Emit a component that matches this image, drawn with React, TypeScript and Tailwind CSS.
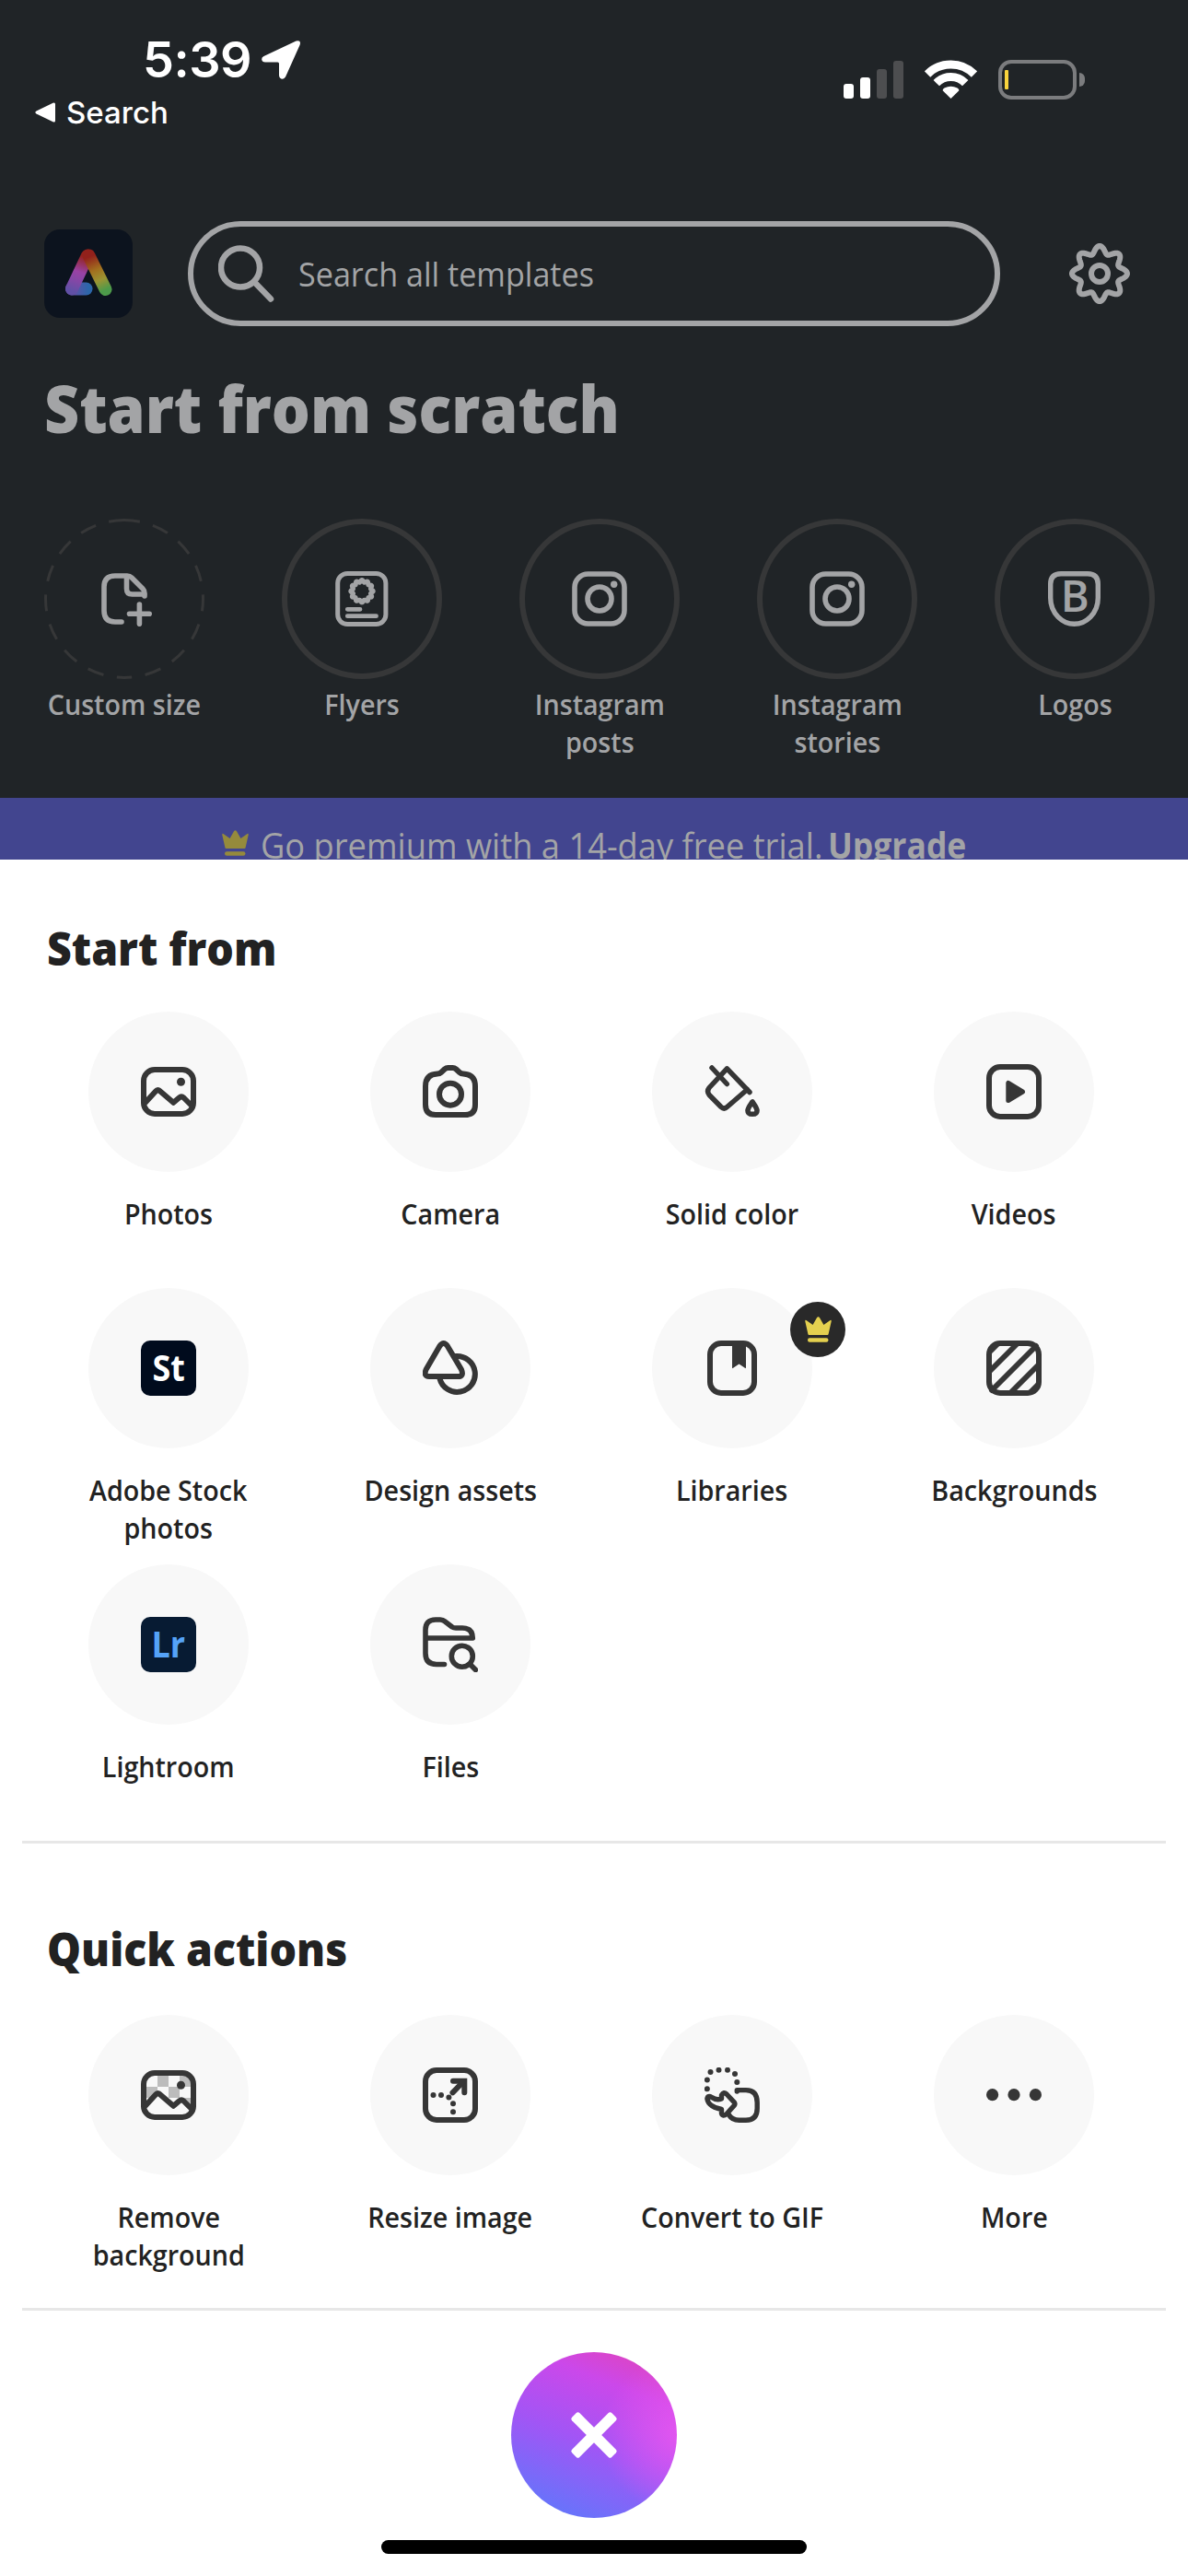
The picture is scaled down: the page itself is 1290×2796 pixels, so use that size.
import type { ReactNode } from "react";
import { clsx } from "clsx";

/* ------------------------------------------------------------------ */
/*  Home screen with the "create new" sheet open                       */
/* ------------------------------------------------------------------ */

interface Item {
  label: string[];
  icon: ReactNode;
  premium?: boolean;
  dashed?: boolean;
}

/** Closed wavy outline around a centre, used by the gear and the flyer seal */
function wavyPath(cx: number, cy: number, r: number, amp: number, lobes: number) {
  const pts: string[] = [];
  for (let i = 0; i < 240; i++) {
    const t = (i / 240) * Math.PI * 2;
    const a = t - Math.PI / 2;
    const rr = r + amp * Math.cos(lobes * t);
    pts.push(`${(cx + rr * Math.cos(a)).toFixed(2)} ${(cy + rr * Math.sin(a)).toFixed(2)}`);
  }
  return `M${pts.join("L")}Z`;
}

/** 60px outline icon */
function Icon({ children, width = 6 }: { children: ReactNode; width?: number }) {
  return (
    <svg
      className="size-[60px]"
      viewBox="0 0 60 60"
      fill="none"
      stroke="currentColor"
      strokeWidth={width}
      strokeLinecap="round"
      strokeLinejoin="round"
    >
      {children}
    </svg>
  );
}

function Dots({ points, r = 3 }: { points: [number, number][]; r?: number }) {
  return (
    <g fill="currentColor" stroke="none">
      {points.map(([x, y]) => (
        <circle key={`${x}-${y}`} cx={x} cy={y} r={r} />
      ))}
    </g>
  );
}

function Crown({ className }: { className?: string }) {
  return (
    <svg className={clsx("h-[28px] w-[29px]", className)} viewBox="0 0 29 28" fill="currentColor">
      <path d="M.3 5.2Q.1 3.2 1.8 4.2L8.6 9 13 1.2Q14.5-.8 16 1.2L20.4 9 27.2 4.2Q28.9 3.2 28.7 5.2L25.6 19Q25.4 20 24.6 20H4.4Q3.6 20 3.4 19Z" />
      <rect x="3" y="23.3" width="22.5" height="4.5" rx="2.2" />
    </svg>
  );
}

/* ─── Icons ─────────────────────────────────────────────────────────── */

const frame = <rect x="3" y="3" width="54" height="54" rx="12" />;

const mountains = (
  <>
    <rect x="3" y="6" width="54" height="48" rx="12" />
    <path d="M5 41.5 16 29.5Q18.5 26.5 21 29.5L35.3 41.8 41.5 36.5Q44 34.3 46.5 36.5L54.5 44.5" />
    <circle cx="43.5" cy="19.3" r="4.5" fill="currentColor" stroke="none" />
  </>
);

const photosIcon = <Icon>{mountains}</Icon>;

const cameraIcon = (
  <Icon>
    <path d="M20 9 24 5.3Q25.5 4 27.5 4H32.5Q34.5 4 36 5.3L40 9Q41.6 10.5 44 10.5 57 11 57 24V44Q57 55 46 55H14Q3 55 3 44V24Q3 11 16 10.5 18.4 10.5 20 9Z" />
    <circle cx="30" cy="32.7" r="12" />
  </Icon>
);

const fillIcon = (
  <Icon width={5.5}>
    <path d="M8 4 24.3 21.5" />
    <path d="M49 30.5 24.4 4.8 5.2 25.5Q2 29.5 5.2 33.5L18 46.5Q21.3 49.5 24.5 46.5L46.5 27.5" />
    <path d="M52 41C49.5 44.5 47 47.5 47 50.5 47 53.5 49 54.3 52 54.3S57 53.5 57 50.5C57 47.5 54.5 44.5 52 41Z" strokeWidth="5.6" />
  </Icon>
);

const videoIcon = (
  <Icon>
    {frame}
    <path d="M23.8 20.5V39.5L39.5 30Z" fill="currentColor" strokeWidth="5" />
  </Icon>
);

const assetsIcon = (
  <Icon>
    <path d="M18.3 6.2Q22.7-.2 27 6.2L42 31.5Q45 39 38.5 39H7Q.6 39 3.6 31.5Z" />
    <path d="M35.5 17A19.5 19.5 0 1 1 18.4 41" />
  </Icon>
);

const librariesIcon = (
  <Icon>
    <rect x="6" y="3" width="48" height="54" rx="12" />
    <path d="M30 4H45V29Q45 31 43.5 29.5L37.5 25.5 31.5 29.5Q30 31 30 29Z" fill="currentColor" stroke="none" />
  </Icon>
);

const backgroundsIcon = (
  <Icon>
    {frame}
    <path d="M5 11 11 5M4 33 33.5 3.5M6 54 54 6M26.5 56.5 56.5 26.5M49 55 55 49" />
  </Icon>
);

const filesIcon = (
  <Icon width={5.6}>
    <path d="M23.5 51.5H15Q3 51.5 3 39.5V14Q3 3 14 3H19Q22 3 24.5 5.2L32 11Q33.5 12 36 12H43Q54 12 54.3 23H4" />
    <circle cx="42.8" cy="42.7" r="11.5" />
    <path d="M51.5 51.5 57.5 57.5" />
  </Icon>
);

const removeBgIcon = (
  <Icon>
    <g fill="#bcbcbc" stroke="none">
      <rect x="18" y="9" width="12" height="12" />
      <rect x="42" y="9" width="12" height="12" />
      <rect x="6" y="21" width="12" height="12" />
      <rect x="30" y="21" width="12" height="12" />
      <rect x="42" y="33" width="12" height="12" />
    </g>
    <path d="M6 40 18.5 27.5 35.3 41.8 44 35 54 44V50H6Z" fill="#f8f8f8" stroke="none" />
    {mountains}
  </Icon>
);

const resizeIcon = (
  <Icon>
    {frame}
    <path d="M33 14.7H45.3V27.3" strokeLinejoin="miter" />
    <path d="M32.5 27.3 44 15.5" />
    <Dots points={[[11.5, 30], [20, 30], [28.4, 32.5], [33, 39.3], [33, 48.3]]} />
  </Icon>
);

const gifIcon = (
  <Icon width={5.4}>
    <Dots points={[[2.8, 23.3], [2.8, 13.5], [6.5, 5], [15.5, 2.8], [25, 2.8], [33, 7], [35.3, 16]]} />
    <path d="M35.3 26V24.6H45Q57.2 24.6 57.2 38V44.5Q57.2 57.2 45 57.2H37.5Q30 57.2 26.5 51.5" />
    <path d="M2.9 34Q3.5 30 8 32.5 13 36 18.5 34V30Q20.8 26 24 29L32.3 37.8Q33.5 39.5 32.3 41.2L24 50.5Q19.8 54 18.5 50V45.5Q4 42.5 2.9 34Z" />
  </Icon>
);

const moreIcon = (
  <Icon>
    <Dots points={[[6.6, 29.7], [30, 29.7], [53.4, 29.7]]} r={6.6} />
  </Icon>
);

const customSizeIcon = (
  <Icon width={5.6}>
    <path d="M27 55H20Q8 55 8 43V17Q8 5 20 5H33Q36 5 38 7L50 19Q52 21 52 24V27" />
    <path d="M32.5 6V19Q32.5 25 38.5 25H51.5" />
    <path d="M35.5 46.3H57.2M46.4 36V57.3" />
  </Icon>
);

const flyerIcon = (
  <Icon width={5}>
    <rect x="3.7" y="2.5" width="52.2" height="55" rx="10.5" />
    <path d={wavyPath(30, 21.7, 11, 1.3, 12)} strokeWidth="4.8" />
    <path d="M14.3 41.3H28M14.3 48.7H45.5" strokeWidth="4.8" />
  </Icon>
);

const instagramIcon = (
  <Icon width={5.6}>
    <rect x="3" y="3" width="54" height="54" rx="14.5" />
    <circle cx="30" cy="30" r="13" />
    <circle cx="45.7" cy="14.2" r="3.7" fill="currentColor" stroke="none" />
  </Icon>
);

const logosIcon = (
  <Icon width={5.4}>
    <path d="M15 2.7H44Q55.3 2.7 55.3 14V29C55.3 46 42 57.3 29.5 57.3S3.7 46 3.7 29V14Q3.7 2.7 15 2.7Z" />
    <text
      x="14.7"
      y="43.6"
      className="font-['Open_Sans',sans-serif] text-[47px] font-semibold"
      fill="currentColor"
      stroke="none"
    >
      B
    </text>
  </Icon>
);

/** Square product badge such as "St" or "Lr" */
function ProductBadge({ name, className }: { name: string; className: string }) {
  return (
    <div
      className={clsx(
        "flex size-[60px] items-center justify-center rounded-[10px] pb-[4px] text-[39px] leading-none font-bold",
        className
      )}
    >
      <span className="scale-x-[0.92]">{name}</span>
    </div>
  );
}

/* ─── Data ──────────────────────────────────────────────────────────── */

const templates: Item[] = [
  { label: ["Custom size"], icon: customSizeIcon, dashed: true },
  { label: ["Flyers"], icon: flyerIcon },
  { label: ["Instagram", "posts"], icon: instagramIcon },
  { label: ["Instagram", "stories"], icon: instagramIcon },
  { label: ["Logos"], icon: logosIcon },
];

const startFrom: Item[] = [
  { label: ["Photos"], icon: photosIcon },
  { label: ["Camera"], icon: cameraIcon },
  { label: ["Solid color"], icon: fillIcon },
  { label: ["Videos"], icon: videoIcon },
  { label: ["Adobe Stock", "photos"], icon: <ProductBadge name="St" className="bg-[#000b1d] text-white" /> },
  { label: ["Design assets"], icon: assetsIcon },
  { label: ["Libraries"], icon: librariesIcon, premium: true },
  { label: ["Backgrounds"], icon: backgroundsIcon },
  { label: ["Lightroom"], icon: <ProductBadge name="Lr" className="bg-[#071b33] text-[#55a3f8]" /> },
  { label: ["Files"], icon: filesIcon },
];

const quickActions: Item[] = [
  { label: ["Remove", "background"], icon: removeBgIcon },
  { label: ["Resize image"], icon: resizeIcon },
  { label: ["Convert to GIF"], icon: gifIcon },
  { label: ["More"], icon: moreIcon },
];

/* ─── Building blocks ───────────────────────────────────────────────── */

function Label({ lines }: { lines: string[] }) {
  return (
    <div className="scale-x-[0.925] text-center text-[31px] leading-[41px] font-[640] whitespace-nowrap">
      {lines.map((line) => (
        <div key={line}>{line}</div>
      ))}
    </div>
  );
}

function StatusBar() {
  return (
    <div className="flex h-[240px] justify-between font-[Inter,sans-serif] text-white">
      <div className="flex flex-col gap-[7px] pt-[35px] pl-[38px]">
        <div className="flex h-[60px] items-center gap-[11px] pl-[117px]">
          <span className="text-[54px] leading-none font-[560] tracking-[-0.5px]">5:39</span>
          <svg className="size-[42px]" viewBox="0 0 42 42" fill="currentColor">
            <path d="M37.5.5Q43.5-1 41.5 5L26 39.5Q23 43.500 20 40.5 19 39.5 19 37.5V25Q19 23.5 17.5 23.5H4Q.5 23.3.2 20.5 0 18 2.5 17Z" />
          </svg>
        </div>
        <div className="flex h-[40px] items-center gap-[12px]">
          <svg className="h-[22px] w-[22px]" viewBox="0 0 22 22" fill="currentColor">
            <path d="M19.5.7Q22-.3 22 2V20Q22 22.3 19.5 21.3L1.5 12.5Q-.8 11 1.5 9.5Z" />
          </svg>
          <span className="text-[33px] leading-none font-medium">Search</span>
        </div>
      </div>
      <div className="mt-[65px] flex h-[43px] items-end pr-[112px]">
        <div className="mr-[23px] mb-[1px] flex h-[42px] items-end gap-[7px]">
          <div className="h-[16px] w-[11px] rounded-[3px] bg-white" />
          <div className="h-[23px] w-[11px] rounded-[3px] bg-white" />
          <div className="h-[32px] w-[11px] rounded-[3px] bg-[#4d4e50]" />
          <div className="h-[41px] w-[11px] rounded-[3px] bg-[#4d4e50]" />
        </div>
        <svg className="mr-[23px] mb-[1px] h-[42px] w-[57px]" viewBox="0 0 57 42">
          <g fill="none" stroke="currentColor" strokeWidth="9">
            <path d="M3 15.5A36 36 0 0 1 54 15.5" />
            <path d="M12.8 25.2A22 22 0 0 1 44.2 25.2" />
          </g>
          <path d="M28.5 42 19.6 33.2Q19.5 31.5 21.5 30.5 28.5 27 35.5 30.5 37.5 31.5 37.4 33.2Z" fill="currentColor" />
        </svg>
        <div className="flex items-center gap-[3px]">
          <div className="h-[43px] w-[85px] rounded-[14px] border-[4px] border-[#7b7c7e] py-[7px] pl-[3px]">
            <div className="h-[21px] w-[4px] rounded-[1px] bg-[#f8d33c]" />
          </div>
          <div className="h-[15px] w-[6px] rounded-r-full bg-[#7b7c7e]" />
        </div>
      </div>
    </div>
  );
}

function AppLogo() {
  return (
    <svg className="size-[96px]" viewBox="0 0 96 96" fill="none">
      <defs>
        <linearGradient id="legRight" x1="48" y1="24" x2="67" y2="68" gradientUnits="userSpaceOnUse">
          <stop offset="0.12" stopColor="#92211b" />
          <stop offset="0.45" stopColor="#a2701f" />
          <stop offset="0.7" stopColor="#9b9433" />
          <stop offset="0.95" stopColor="#4d9a4a" />
        </linearGradient>
        <linearGradient id="legLeft" x1="48" y1="26" x2="34" y2="68" gradientUnits="userSpaceOnUse">
          <stop offset="0.1" stopColor="#92211b" />
          <stop offset="0.5" stopColor="#9942a4" />
          <stop offset="0.75" stopColor="#8248a6" />
          <stop offset="1" stopColor="#6150a6" />
        </linearGradient>
        <linearGradient id="foot" x1="27" y1="0" x2="48" y2="0" gradientUnits="userSpaceOnUse">
          <stop offset="0" stopColor="#6f4ca6" />
          <stop offset="1" stopColor="#2c66aa" />
        </linearGradient>
      </defs>
      <rect width="96" height="96" rx="17" fill="#0c131e" />
      <path d="M30 64.500H45.5" stroke="url(#foot)" strokeWidth="14" strokeLinecap="round" />
      <path d="M47 28.5 30 64.5" stroke="url(#legLeft)" strokeWidth="14" strokeLinecap="round" />
      <path d="M48.5 28.5 66.5 65" stroke="url(#legRight)" strokeWidth="14" strokeLinecap="round" />
    </svg>
  );
}

function SearchHeader() {
  return (
    <div className="flex items-center pl-[48px]">
      <AppLogo />
      <div className="ml-[60px] flex h-[114px] w-[882px] items-center rounded-full border-[6px] border-[#a3a4a6] pl-[27px]">
        <svg className="size-[62px]" viewBox="0 0 62 62" fill="none" stroke="currentColor" strokeWidth="6.5" strokeLinecap="round">
          <circle cx="24" cy="24.5" r="21" />
          <path d="M40 41 57 58.5" />
        </svg>
        <span className="ml-[25px] origin-left scale-x-[0.935] text-[36.5px] whitespace-nowrap">Search all templates</span>
      </div>
      <svg className="ml-[74px] size-[68px]" viewBox="0 0 68 68" fill="none" stroke="currentColor" strokeWidth="6" strokeLinejoin="round">
        <path d={wavyPath(34, 34, 26, 4, 8)} />
        <circle cx="34" cy="34" r="9" />
      </svg>
    </div>
  );
}

function TemplateItem({ item }: { item: Item }) {
  return (
    <div className="flex w-[174px] shrink-0 flex-col items-center gap-[7px]">
      {item.dashed ? (
        <div className="relative flex size-[174px] items-center justify-center">
          <svg
            className="absolute inset-0 size-full"
            viewBox="0 0 174 174"
            fill="none"
            stroke="#363738"
            strokeWidth="3"
            strokeDasharray="18 14.6"
            strokeDashoffset="1"
          >
            <path d="M87 1.5A85.5 85.5 0 0 1 87 172.5" />
            <path d="M87 1.5A85.5 85.5 0 0 0 87 172.5" />
          </svg>
          {item.icon}
        </div>
      ) : (
        <div className="flex size-[174px] items-center justify-center rounded-full border-[6px] border-[#363738]">
          {item.icon}
        </div>
      )}
      <Label lines={item.label} />
    </div>
  );
}

function SheetItem({ item }: { item: Item }) {
  return (
    <div className="flex flex-col items-center gap-[25px] text-[#222222]">
      <div className="relative flex size-[174px] items-center justify-center rounded-full bg-[#f8f8f8] text-[#363636]">
        {item.icon}
        {item.premium && (
          <div className="absolute top-[15px] left-[150px] flex size-[60px] items-center justify-center rounded-full bg-[#292929]">
            <Crown className="text-[#e4d04f]" />
          </div>
        )}
      </div>
      <Label lines={item.label} />
    </div>
  );
}

function SheetHeading({ children }: { children: ReactNode }) {
  return (
    <h2 className="h-[60px] origin-left scale-x-[0.948] text-[49px] leading-[60px] font-extrabold text-[#222222]">
      {children}
    </h2>
  );
}

/* ─── Screen ────────────────────────────────────────────────────────── */

export default function App() {
  return (
    <div className="flex h-[2796px] w-[1290px] flex-col overflow-hidden bg-white font-['Open_Sans',sans-serif]">
      {/* Dimmed home screen */}
      <div className="h-[866px] bg-[#202427] text-[#a3a4a6]">
        <StatusBar />
        <SearchHeader />
        <h1 className="mt-[39px] ml-[48px] h-[100px] origin-left scale-x-[0.945] text-[70px] leading-[100px] font-extrabold">
          Start from scratch
        </h1>
        <div className="mt-[70px] flex gap-[84px] pl-[48px]">
          {templates.map((item, i) => (
            <TemplateItem key={i} item={item} />
          ))}
        </div>
      </div>

      {/* Premium banner, cut off by the sheet */}
      <div className="h-[67px] overflow-hidden bg-[#42458f] text-[#a3a4a6]">
        <div className="flex h-[103px] items-center pl-[241px] text-[39px] whitespace-nowrap">
          <Crown className="mb-[6px] text-[#958a3c]" />
          <span className="ml-[13px] w-[607px]">
            <span className="inline-block origin-left scale-x-[0.93]">Go premium with a 14-day free trial.</span>
          </span>
          <span className="ml-[9px] inline-block origin-left scale-x-[0.91] font-bold">Upgrade</span>
        </div>
      </div>

      {/* Create sheet */}
      <div className="flex flex-1 flex-col pt-[66px]">
        <div className="pl-[51px]">
          <SheetHeading>Start from</SheetHeading>
        </div>
        <div className="mx-[30px] mt-[39px] grid w-[1224px] auto-rows-[300px] grid-cols-4">
          {startFrom.map((item, i) => (
            <SheetItem key={i} item={item} />
          ))}
        </div>
        <div className="mx-[24px] h-[3px] bg-[#e7e7e7]" />

        <div className="mt-[84px] pl-[51px]">
          <SheetHeading>Quick actions</SheetHeading>
        </div>
        <div className="mx-[30px] mt-[42px] grid w-[1224px] auto-rows-[318px] grid-cols-4">
          {quickActions.map((item, i) => (
            <SheetItem key={i} item={item} />
          ))}
        </div>
        <div className="mx-[24px] h-[3px] bg-[#e7e7e7]" />

        <div className="mt-[45px] flex flex-col items-center">
          <button className="flex size-[180px] items-center justify-center rounded-full bg-[radial-gradient(circle_at_102%_50%,rgba(236,88,240,0.8),rgba(220,88,240,0)_42%),linear-gradient(22deg,#6276fb_8%,#a255f5_46%,#cb48ea_75%,#e044bc_95%)] text-white">
            <svg className="size-[60px]" viewBox="0 0 60 60" fill="currentColor">
              <rect x="-0.5" y="24.2" width="61" height="11.6" rx="2.5" transform="rotate(45 30 30)" />
              <rect x="-0.5" y="24.2" width="61" height="11.6" rx="2.5" transform="rotate(-45 30 30)" />
            </svg>
          </button>
          <div className="mt-[24px] h-[15px] w-[462px] rounded-full bg-black" />
        </div>
      </div>
    </div>
  );
}
